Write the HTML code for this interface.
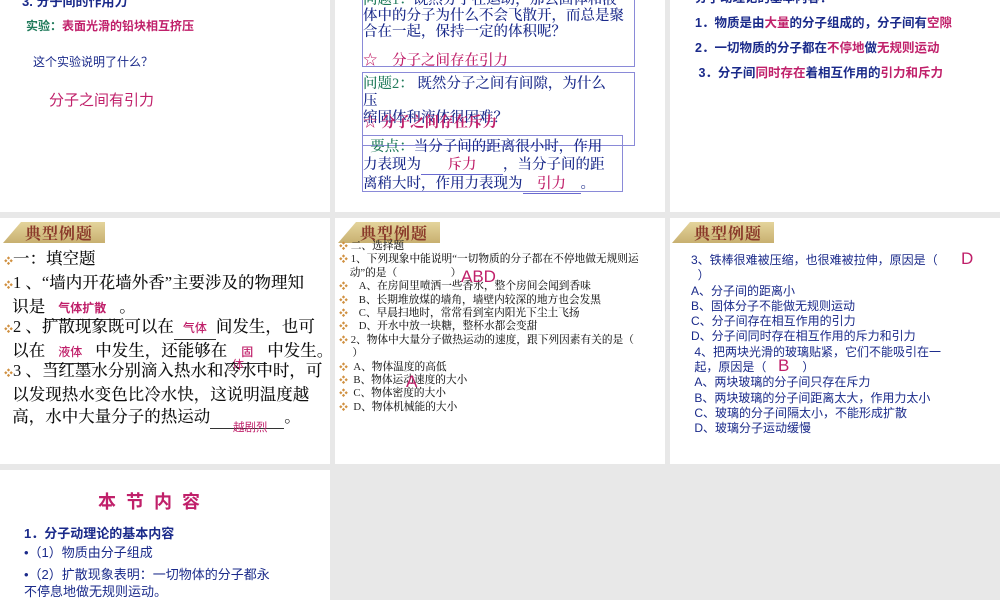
<!DOCTYPE html>
<html><head><meta charset="utf-8"><style>
*{margin:0;padding:0;box-sizing:border-box}
body{width:1000px;height:600px;background:#e8e8e8;position:relative;overflow:hidden;font-family:"Liberation Serif","Noto Serif CJK SC","Noto Sans CJK SC",serif}
.p{position:absolute;background:#fff;overflow:hidden}
.a{position:absolute;white-space:nowrap}
.s{font-family:"Liberation Sans","Noto Sans CJK SC",sans-serif}
.nv{color:#1a2a8a}.mg{color:#c0206a}.gr{color:#1f7a5a}
.badge{position:absolute;left:3px;top:4px;width:102px;height:21px;background:linear-gradient(#e4d49c,#c8b070);clip-path:polygon(18px 0,100% 0,100% 100%,0 100%);color:#8a3a2a;font-size:16px;letter-spacing:1px;padding-left:22px;line-height:21px;font-family:"Noto Serif CJK SC",serif;font-weight:bold}
.box{position:absolute;border:1px solid #8a8ad8}
.u{display:inline-block;border-bottom:1px solid #333;text-align:center}
.d{color:#d09040;font-size:9px}
</style></head><body>

<!-- row1 col1 -->
<div class="p" style="left:0;top:0;width:330px;height:212px">
<div class="a s nv" style="left:22px;top:-9px;font-size:13px;font-weight:bold">3. 分子间的作用力</div>
<div class="a s" style="left:26px;top:17px;font-size:12px;font-weight:bold"><span class="gr">实验：</span><span class="mg">表面光滑的铅块相互挤压</span></div>
<div class="a s nv" style="left:33px;top:53px;font-size:12px">这个实验说明了什么？</div>
<div class="a s mg" style="left:49px;top:89px;font-size:15px">分子之间有引力</div>
</div>

<!-- row1 col2 -->
<div class="p" style="left:335px;top:0;width:330px;height:212px">
<div class="box" style="left:27px;top:-5px;width:273px;height:72px"></div>
<div class="box" style="left:27px;top:72px;width:273px;height:74px"></div>
<div class="box" style="left:27px;top:135px;width:261px;height:57px"></div>
<div class="a nv" style="left:28px;top:-8px;font-size:14.5px;line-height:16px;font-weight:500"><span class="gr">问题1：</span>既然分子在运动，那么固体和液<br>体中的分子为什么不会飞散开，而总是聚<br>合在一起，保持一定的体积呢？</div>
<div class="a mg" style="left:28px;top:49px;font-size:14.5px;font-weight:500">☆　分子之间存在引力</div>
<div class="a nv" style="left:28px;top:76px;font-size:14.5px;line-height:17px;font-weight:500"><span class="gr">问题2：</span> 既然分子之间有间隙，为什么<br>压<br>缩固体和液体很困难？</div>
<div class="a mg" style="left:28px;top:111px;font-size:14.5px;font-weight:bold">☆ 分子之间存在斥力</div>
<div class="a nv" style="left:28px;top:138px;font-size:14.5px;line-height:18px;font-weight:500">&nbsp;&nbsp;<span class="gr">要点：</span>当分子间的距离很小时，作用<br>力表现为<span class="u mg" style="width:82px;border-color:#6a6ad0">斥力</span>，当分子间的距<br>离稍大时，作用力表现为<span class="u mg" style="width:58px;border-color:#6a6ad0">引力</span>。</div>
</div>

<!-- row1 col3 -->
<div class="p" style="left:670px;top:0;width:330px;height:212px">
<div class="a s nv" style="left:25px;top:-14px;font-size:12.5px;font-weight:bold;line-height:25px">分子动理论的基本内容：<br>1．物质是由<span class="mg">大量</span>的分子组成的，分子间有<span class="mg">空隙</span><br>2．一切物质的分子都在<span class="mg">不停地</span>做<span class="mg">无规则运动</span><br>&nbsp;3．分子间<span class="mg">同时存在</span>着相互作用的<span class="mg">引力和斥力</span></div>
</div>

<!-- row2 col1 -->
<div class="p" style="left:0;top:218px;width:330px;height:246px">
<div class="badge">典型例题</div>
<div class="a" style="left:4px;top:30px;font-size:16.5px;line-height:22px;color:#111;font-weight:500"><span class="d">❖</span>一：填空题</div>
<div class="a" style="left:4px;top:54px;font-size:16.5px;line-height:22px;color:#111;font-weight:500"><span class="d">❖</span>1 、“墙内开花墙外香”主要涉及的物理知<br>&nbsp;&nbsp;识是<span class="u mg s" style="width:74px;font-size:12px;font-weight:bold">气体扩散</span>。</div>
<div class="a" style="left:4px;top:98px;font-size:16.5px;line-height:22px;color:#111;font-weight:500"><span class="d">❖</span>2 、扩散现象既可以在<span class="u mg s" style="width:42px;font-size:12px">气体</span>间发生，也可<br>&nbsp;&nbsp;以在<span class="u mg s" style="width:50px;font-size:12px">液体</span>中发生，还能够在<span class="u mg s" style="width:40px;font-size:12px">固</span>中发生。</div>
<div class="a mg s" style="left:232px;top:138px;font-size:12px">体</div>
<div class="a" style="left:4px;top:142px;font-size:16.5px;line-height:22px;color:#111;font-weight:500"><span class="d">❖</span>3 、当红墨水分别滴入热水和冷水中时，可<br>&nbsp;&nbsp;以发现热水变色比冷水快，这说明温度越<br>&nbsp;&nbsp;高，水中大量分子的热运动<span class="u" style="width:74px">&nbsp;</span>。</div>
<div class="a mg s" style="left:233px;top:201px;font-size:11.5px">越剧烈</div>
</div>

<!-- row2 col2 -->
<div class="p" style="left:335px;top:218px;width:330px;height:246px">
<div class="badge">典型例题</div>
<div class="a" style="left:4px;top:22px;font-size:10.7px;line-height:13.4px;color:#222;font-weight:500">
<span class="d">❖</span> 二、选择题<br>
<span class="d">❖</span> 1、下列现象中能说明“一切物质的分子都在不停地做无规则运<br>&nbsp;&nbsp;&nbsp;&nbsp;动”的是（　　　　　）<br>
<span class="d">❖</span> &nbsp;&nbsp;&nbsp;A、在房间里喷洒一些香水，整个房间会闻到香味<br>
<span class="d">❖</span> &nbsp;&nbsp;&nbsp;B、长期堆放煤的墙角，墙壁内较深的地方也会发黑<br>
<span class="d">❖</span> &nbsp;&nbsp;&nbsp;C、早晨扫地时，常常看到室内阳光下尘土飞扬<br>
<span class="d">❖</span> &nbsp;&nbsp;&nbsp;D、开水中放一块糖，整杯水都会变甜<br>
<span class="d">❖</span> 2、物体中大量分子做热运动的速度，跟下列因素有关的是（<br>&nbsp;&nbsp;&nbsp;&nbsp;&nbsp;）<br>
<span class="d">❖</span> &nbsp;A、物体温度的高低<br>
<span class="d">❖</span> &nbsp;B、物体运动速度的大小<br>
<span class="d">❖</span> &nbsp;C、物体密度的大小<br>
<span class="d">❖</span> &nbsp;D、物体机械能的大小</div>
<div class="a mg s" style="left:126px;top:49px;font-size:17px">ABD</div>
<div class="a mg s" style="left:71px;top:154px;font-size:17px">A</div>
</div>

<!-- row2 col3 -->
<div class="p" style="left:670px;top:218px;width:330px;height:246px">
<div class="badge" style="left:2px">典型例题</div>
<div class="a nv s" style="left:21px;top:35px;font-size:12px;line-height:15.3px">3、铁棒很难被压缩，也很难被拉伸，原因是（<br>&nbsp;&nbsp;）<br>A、分子间的距离小<br>B、固体分子不能做无规则运动<br>C、分子间存在相互作用的引力<br>D、分子间同时存在相互作用的斥力和引力<br>&nbsp;4、把两块光滑的玻璃贴紧，它们不能吸引在一<br>&nbsp;起，原因是（　　　）<br>&nbsp;A、两块玻璃的分子间只存在斥力<br>&nbsp;B、两块玻璃的分子间距离太大，作用力太小<br>&nbsp;C、玻璃的分子间隔太小，不能形成扩散<br>&nbsp;D、玻璃分子运动缓慢</div>
<div class="a mg s" style="left:291px;top:31px;font-size:17px">D</div>
<div class="a mg s" style="left:108px;top:138px;font-size:17px">B</div>
</div>

<!-- row3 col1 -->
<div class="p" style="left:0;top:470px;width:330px;height:130px">
<div class="a s mg" style="left:98px;top:18px;font-size:18px;font-weight:bold;letter-spacing:10px">本节内容</div>
<div class="a s nv" style="left:24px;top:53px;font-size:13px;font-weight:bold">1．分子动理论的基本内容</div>
<div class="a s nv" style="left:24px;top:74px;font-size:13px;line-height:17px">•（1）物质由分子组成</div>
<div class="a s nv" style="left:24px;top:96px;font-size:13px;line-height:17px">•（2）扩散现象表明：一切物体的分子都永<br>不停息地做无规则运动。</div>
</div>

</body></html>
